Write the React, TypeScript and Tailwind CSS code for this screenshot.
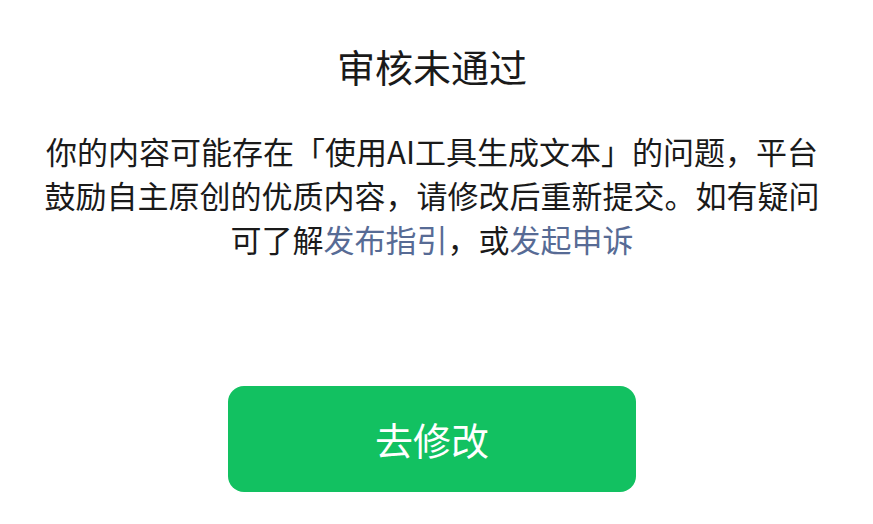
export default function App() {
  return (
    <div
      className="flex min-h-[524px] w-full flex-col items-center bg-white pr-[9px] pt-[41px]"
      style={{ fontFamily: '"Noto Sans CJK SC", "Noto Sans", sans-serif' }}
    >
      <h1 className="text-[38px] font-normal leading-[50px] text-[#1a1a1a]">审核未通过</h1>
      <div className="mt-[38px] w-full px-[30px] text-center text-[31px] leading-[44px] text-[#1a1a1a]">
        <p className="whitespace-nowrap">你的内容可能存在「使用AI工具生成文本」的问题，平台</p>
        <p className="whitespace-nowrap">鼓励自主原创的优质内容，请修改后重新提交。如有疑问</p>
        <p className="whitespace-nowrap">
          可了解<a className="text-[#576b95]">发布指引</a>，或<a className="text-[#576b95]">发起申诉</a>
        </p>
      </div>
      <button className="mt-[125px] flex h-[106px] w-[408px] items-center justify-center rounded-[16px] bg-[#12c161] text-[38px] leading-none text-white">
        去修改
      </button>
    </div>
  );
}
